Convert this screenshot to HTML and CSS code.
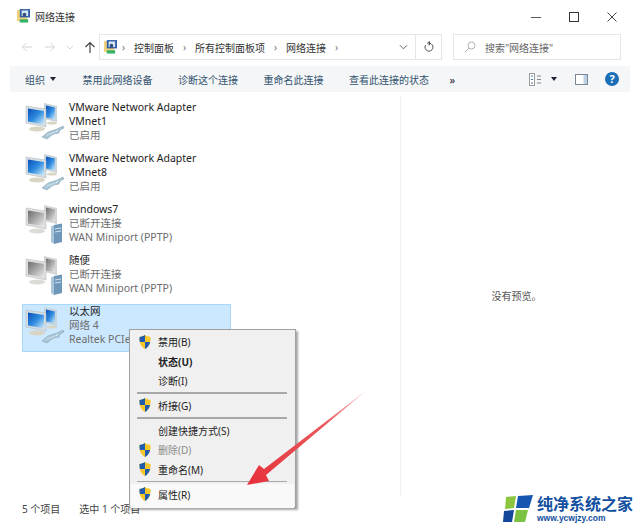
FILE: index.html
```html
<!DOCTYPE html>
<html lang="zh-CN">
<head>
<meta charset="utf-8">
<title>网络连接</title>
<link rel="stylesheet" href="styles.css">
</head>
<body>
<svg class="defs" width="0" height="0" aria-hidden="true">
  <defs>
    <linearGradient id="scr" x1="0" y1="0" x2="1" y2="1">
      <stop offset="0" stop-color="#0b4fb8"/><stop offset=".5" stop-color="#2d8be0"/><stop offset="1" stop-color="#d2eefc"/>
    </linearGradient>
    <linearGradient id="scrg" x1="0" y1="0" x2="1" y2="1">
      <stop offset="0" stop-color="#6e6e6e"/><stop offset=".5" stop-color="#a8a8a8"/><stop offset="1" stop-color="#ececec"/>
    </linearGradient>
    <linearGradient id="tail" x1="1" y1="0" x2="0" y2="1">
      <stop offset="0" stop-color="#f4c4c4"/><stop offset=".35" stop-color="#e85a5e"/><stop offset="1" stop-color="#e7303a"/>
    </linearGradient>
    <symbol id="net" viewBox="0 0 40 42">
      <path d="M19 1l13 3v16l-13-3z" fill="#c9d3da"/>
      <path d="M21 3.500l9 2v12l-9-2z" fill="url(#scr)"/>
      <path d="M1 4l20 3v18L1 21z" fill="#d5dde2" stroke="#aab6be" stroke-width=".5"/>
      <path d="M3 6.500l16 2.500v13.500L3 19.500z" fill="url(#scr)"/>
      <ellipse cx="12" cy="27" rx="8" ry="2.500" fill="#d9d5c4"/>
      <ellipse cx="27" cy="21" rx="5" ry="1.500" fill="#d9d5c4"/>
      <path d="M17 35l6-5 9-3 6-3 1 2-4 2-1 3-5 1-2 1-5 4z" fill="#a9c6d6" stroke="#7b9db1" stroke-width=".5"/>
      <path d="M22 33.500l2-2M25 32.500l2-2M28 31.500l2-2M31 30l2-2" stroke="#eef5f9" stroke-width=".9"/>
    </symbol>
    <symbol id="netoff" viewBox="0 0 40 42">
      <path d="M19 1l13 3v16l-13-3z" fill="#d4d4d4"/>
      <path d="M21 3.500l9 2v12l-9-2z" fill="url(#scrg)"/>
      <path d="M1 4l20 3v18L1 21z" fill="#dedede" stroke="#b5b5b5" stroke-width=".5"/>
      <path d="M3 6.500l16 2.500v13.500L3 19.500z" fill="url(#scrg)"/>
      <ellipse cx="12" cy="27" rx="8" ry="2.500" fill="#dcdcd6"/>
      <path d="M29 21l8-1.500V38l-8 2z" fill="#6f97ba"/>
      <path d="M26 22.500l3-1.500v19l-3-2z" fill="#a9c5da"/>
      <path d="M30 25l6-1M30 28l6-1" stroke="#d5e4ee" stroke-width="1"/>
    </symbol>
    <symbol id="shield" viewBox="0 0 12 14">
      <path d="M6 0C4.500 1.200 2.500 1.800.5 2c-.2 5 .8 9.500 5.500 12 4.700-2.500 5.700-7 5.500-12C9.500 1.800 7.500 1.200 6 0z" fill="#f6c62a"/>
      <path d="M6 0C4.500 1.200 2.500 1.800.5 2 .4 3.700.5 5.400.9 7H6z" fill="#1f5cae"/>
      <path d="M6 7h5.100C10.300 10 8.800 12.500 6 14z" fill="#1f5cae"/>
    </symbol>
    <symbol id="folder" viewBox="0 0 14 16">
      <rect x="0" y="1" width="11" height="12" fill="#f2d27a"/>
      <rect x="3" y="0" width="11" height="9" fill="#2f5fa8"/>
      <rect x="5" y="1.500" width="7" height="6" fill="#d8e6f2"/>
      <circle cx="8" cy="6" r="2" fill="#33507e"/>
      <rect x="3" y="11" width="9" height="3.500" fill="#35b064"/>
    </symbol>
  </defs>
</svg>

<div class="window">
  <header class="titlebar">
    <svg class="title-icon"><use href="#folder"/></svg>
    <span class="title-text">网络连接</span>
    <div class="win-controls">
      <svg class="win-btn" viewBox="0 0 12 12"><path d="M1 6.500h10" stroke="#555" fill="none"/></svg>
      <svg class="win-btn" viewBox="0 0 12 12"><rect x="1.500" y="1.500" width="9" height="9" stroke="#333" fill="none"/></svg>
      <svg class="win-btn" viewBox="0 0 12 12"><path d="M1.500 1.500l9 9M10.500 1.500l-9 9" stroke="#444" fill="none"/></svg>
    </div>
  </header>

  <nav class="navbar">
    <div class="nav-arrows">
      <svg class="nav-arrow" viewBox="0 0 12 12"><path d="M11 6H1.500M5.500 2L1.500 6l4 4" stroke="#d3d3d3" fill="none"/></svg>
      <svg class="nav-arrow" viewBox="0 0 12 12"><path d="M1 6h9.500M6.500 2l4 4-4 4" stroke="#d3d3d3" fill="none"/></svg>
      <svg class="nav-drop" viewBox="0 0 8 5"><path d="M1 1l3 3 3-3" stroke="#d6d6d6" fill="none"/></svg>
      <svg class="nav-arrow" viewBox="0 0 12 12"><path d="M6 12V1.500M1.500 6L6 1.500 10.500 6" stroke="#444" stroke-width="1.200" fill="none"/></svg>
    </div>
    <div class="address">
      <svg class="addr-icon"><use href="#folder"/></svg>
      <span class="crumb-sep">›</span><span class="crumb">控制面板</span>
      <span class="crumb-sep">›</span><span class="crumb">所有控制面板项</span>
      <span class="crumb-sep">›</span><span class="crumb">网络连接</span>
      <span class="crumb-sep">›</span>
      <svg class="addr-chev" viewBox="0 0 10 6"><path d="M1 1l4 4 4-4" stroke="#555" fill="none"/></svg>
      <span class="addr-refresh">
        <svg class="refresh-icon" viewBox="0 0 12 12"><path d="M6.500 2.200A4 4 0 1 1 2.600 4M6.500.500v3.400L4.500 2.200z" stroke="#555" fill="none"/></svg>
      </span>
    </div>
    <div class="search">
      <svg class="search-icon" viewBox="0 0 12 12"><circle cx="7.500" cy="4.500" r="3.500" stroke="#b0b0b0" fill="none"/><path d="M5 7l-4 4" stroke="#b0b0b0" fill="none"/></svg>
      <span>搜索"网络连接"</span>
    </div>
  </nav>

  <div class="toolbar">
    <span class="tool tool-org">组织<i class="caret"></i></span>
    <span class="tool">禁用此网络设备</span>
    <span class="tool">诊断这个连接</span>
    <span class="tool">重命名此连接</span>
    <span class="tool">查看此连接的状态</span>
    <span class="tool-more">»</span>
    <div class="tool-right">
      <svg class="view-icon" viewBox="0 0 13 13"><rect x=".5" y=".5" width="5" height="12" fill="#fff" stroke="#999"/><path d="M2 3h2M2 6.500h2M2 10h2" stroke="#4a7ab0"/><path d="M8 3h4M8 6.500h4M8 10h4" stroke="#888"/></svg>
      <i class="caret view-caret"></i>
      <svg class="pane-icon" viewBox="0 0 13 11"><rect x=".5" y=".5" width="12" height="10" fill="#fff" stroke="#7a8794"/><rect x="8.500" y="1" width="3.500" height="9" fill="#bcd3e6"/></svg>
      <span class="help">?</span>
    </div>
  </div>

  <main class="content">
    <section class="list">
      <article class="row">
        <svg class="net-icon"><use href="#net"/></svg>
        <div class="row-text"><div class="name">VMware Network Adapter</div><div class="name">VMnet1</div><div class="sub">已启用</div></div>
      </article>
      <article class="row">
        <svg class="net-icon"><use href="#net"/></svg>
        <div class="row-text"><div class="name">VMware Network Adapter</div><div class="name">VMnet8</div><div class="sub">已启用</div></div>
      </article>
      <article class="row">
        <svg class="net-icon"><use href="#netoff"/></svg>
        <div class="row-text"><div class="name">windows7</div><div class="sub">已断开连接</div><div class="sub">WAN Miniport (PPTP)</div></div>
      </article>
      <article class="row">
        <svg class="net-icon"><use href="#netoff"/></svg>
        <div class="row-text"><div class="name">随便</div><div class="sub">已断开连接</div><div class="sub">WAN Miniport (PPTP)</div></div>
      </article>
      <article class="row row-selected">
        <svg class="net-icon"><use href="#net"/></svg>
        <div class="row-text"><div class="name">以太网</div><div class="sub">网络 4</div><div class="sub">Realtek PCIe GbE Family</div></div>
      </article>
    </section>
    <aside class="preview">没有预览。</aside>
  </main>

  <footer class="statusbar"><span>5 个项目</span><span>选中 1 个项目</span></footer>

  <ul class="menu">
    <li class="mi"><svg class="shield"><use href="#shield"/></svg>禁用(B)</li>
    <li class="mi mi-bold"><span class="shield"></span>状态(U)</li>
    <li class="mi"><span class="shield"></span>诊断(I)</li>
    <li class="sep"></li>
    <li class="mi"><svg class="shield"><use href="#shield"/></svg>桥接(G)</li>
    <li class="sep"></li>
    <li class="mi"><span class="shield"></span>创建快捷方式(S)</li>
    <li class="mi mi-off"><svg class="shield"><use href="#shield"/></svg>删除(D)</li>
    <li class="mi"><svg class="shield"><use href="#shield"/></svg>重命名(M)</li>
    <li class="sep"></li>
    <li class="mi mi-hover"><svg class="shield"><use href="#shield"/></svg>属性(R)</li>
  </ul>

  <svg class="arrow" viewBox="0 0 130 105">
    <path d="M127 0L24 79l-5-4L7 95l22-4-3-6z" fill="url(#tail)"/>
  </svg>

  <div class="logo">
    <svg class="logo-mark" viewBox="0 0 30 28">
      <path d="M3 2l10-1-2 12-9 1z" fill="#8cc63f"/>
      <path d="M15 1l15-1-4 13-13 0z" fill="#1557b0"/>
      <path d="M1 16l10-1-2 12H0z" fill="#12479a"/>
      <path d="M13 15h12l-3 12H11z" fill="#7cc242"/>
    </svg>
    <div class="logo-text"><div class="logo-cn">纯净系统之家</div><div class="logo-en">www.ycwjzy.com</div></div>
  </div>
</div>
</body>
</html>
```

FILE: styles.css
```css
* { box-sizing: border-box; }
html, body { margin: 0; padding: 0; }
body { background: #fff; font-family: "Noto Sans", "Noto Sans CJK SC", sans-serif; font-size: 10px; color: #222; }
.defs { display: block; height: 0; }
.window { position: relative; width: 640px; height: 529px; display: flex; flex-direction: column; overflow: hidden; }

.titlebar { height: 34px; display: flex; align-items: center; padding: 0 0 1px 17px; flex: none; }
.title-icon { width: 13px; height: 15px; margin-right: 5px; }
.title-text { font-size: 10px; color: #333; }
.win-controls { margin-left: auto; display: flex; gap: 26px; padding-right: 22px; }
.win-btn { width: 12px; height: 12px; }

.navbar { height: 26px; display: flex; align-items: stretch; flex: none; padding-left: 21px; }
.nav-arrows { width: 78px; display: flex; align-items: center; gap: 11px; }
.nav-arrow { width: 12px; height: 12px; }
.nav-drop { width: 8px; height: 5px; margin: 0 -1px; }
.address { width: 343px; border: 1px solid #e6e6e6; display: flex; align-items: center; padding-left: 4px; color: #333; }
.addr-icon { width: 13px; height: 15px; margin-right: -4px; }
.crumb-sep { color: #777; width: 21px; text-align: center; font-size: 10px; }
.crumb { font-size: 10px; }
.addr-chev { width: 9px; height: 6px; margin-left: auto; margin-right: 7px; }
.addr-refresh { width: 26px; height: 100%; border-left: 1px solid #e6e6e6; display: flex; align-items: center; justify-content: center; }
.refresh-icon { width: 12px; height: 12px; }
.search { width: 168px; margin-left: 11px; border: 1px solid #e6e6e6; display: flex; align-items: center; padding-left: 10px; gap: 9px; color: #666; }
.search-icon { width: 12px; height: 12px; }

.toolbar { height: 26px; margin: 6px 10px 0 10px; padding-left: 15px; background: #f5f6f7; display: flex; align-items: center; gap: 25.500px; flex: none; color: #33536f; }
.tool { white-space: nowrap; }
.tool-org { display: flex; align-items: center; gap: 5px; margin-right: 1px; }
.caret { display: inline-block; width: 0; height: 0; border: 3.500px solid transparent; border-top: 4px solid #223; border-bottom: 0; }
.tool-more { font-size: 11px; margin-left: -5px; color: #223; }
.tool-right { margin-left: auto; display: flex; align-items: center; padding-right: 11px; }
.view-icon { width: 13px; height: 13px; }
.view-caret { margin-left: 9px; }
.pane-icon { width: 13px; height: 11px; margin-left: 18px; }
.help { width: 14px; height: 14px; margin-left: 17px; border-radius: 50%; background: #1a6fb8; color: #fff; font-weight: 700; font-size: 11px; line-height: 14px; text-align: center; }

.content { flex: 1; min-height: 0; margin-top: 4px; margin-right: 8px; display: flex; }
.list { width: 401px; border-right: 1px solid #f0f0f0; padding: 4px 0 0 22px; display: flex; flex-direction: column; gap: 3px; }
.row { width: 209px; height: 48px; border: 1px solid transparent; padding-left: 2px; display: flex; gap: 4px; flex: none; overflow: hidden; }
.row-selected { background: #cce8ff; border-color: #a6d8fb; }
.net-icon { width: 40px; height: 42px; flex: none; margin-top: 1px; }
.row-text { min-width: 0; white-space: nowrap; margin-top: -1px; }
.name, .sub { height: 14px; line-height: 14px; font-size: 10.500px; }
.name { color: #222; }
.sub { color: #6d6d6d; }
.preview { flex: 1; display: flex; align-items: center; justify-content: center; padding-bottom: 2px; color: #555; }

.statusbar { height: 33px; flex: none; padding: 6px 0 0 22px; display: flex; gap: 19px; line-height: 14px; color: #444; }

.menu { position: absolute; left: 129px; top: 329px; width: 167px; height: 179px; margin: 0; padding: 2px 0 0; list-style: none; background: #f0f0f0; border: 1px solid #a0a0a0; box-shadow: 2px 2px 2px rgba(0, 0, 0, .35); color: #222; }
.mi { height: 19.400px; display: flex; align-items: center; padding-left: 8px; gap: 7px; margin: 0 1px; }
.shield { width: 12px; height: 14px; flex: none; display: block; }
.mi-bold { font-weight: 700; }
.mi-off { color: #8c8c8c; }
.mi-hover { background: #f9f9f9; height: 24px; padding-bottom: 4px; }
.sep { height: 1.500px; background: #a8a8a8; margin: 2px 8px 2px 7px; }

.arrow { position: absolute; left: 240px; top: 390px; width: 130px; height: 105px; }

.logo { position: absolute; left: 503px; top: 495px; display: flex; gap: 4px; }
.logo-mark { width: 30px; height: 28px; }
.logo-cn { font-size: 16px; line-height: 19px; font-weight: 700; color: #124f9f; }
.logo-en { font-family: "Liberation Sans", sans-serif; font-size: 8.500px; line-height: 9px; font-weight: 700; color: #124f9f; }
```
